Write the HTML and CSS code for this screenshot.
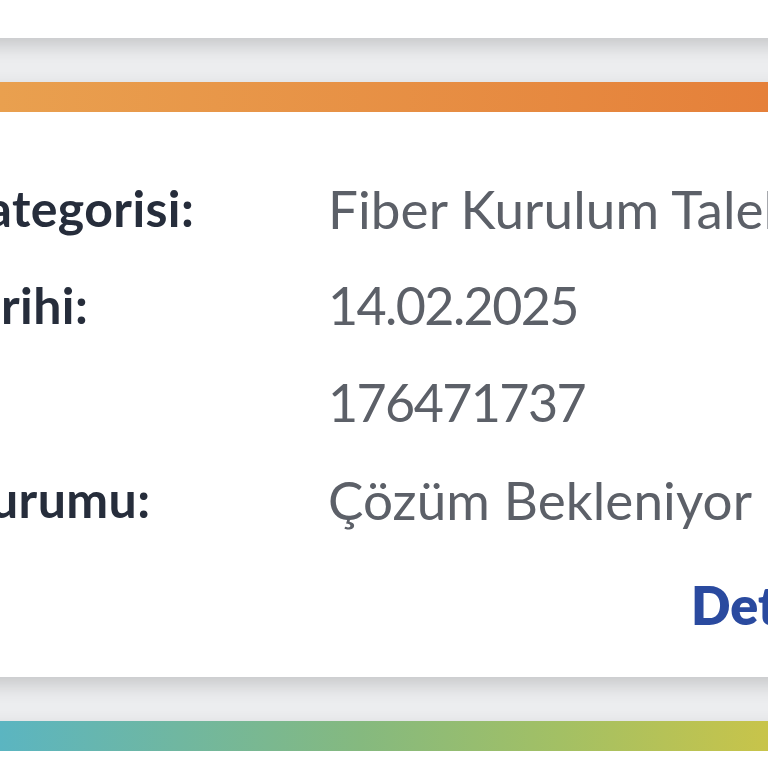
FILE: index.html
```html
<!DOCTYPE html>
<html lang="tr">
<head>
<meta charset="utf-8">
<title>Talep Detayı</title>
<link rel="stylesheet" href="styles.css">
</head>
<body>
<div class="viewport">
  <div class="card card-prev"></div>

  <div class="card">
    <div class="bar bar-orange"></div>
    <div class="card-body">
      <dl class="info">
        <dt class="label">Talep Kategorisi:</dt>
        <dd class="value">Fiber Kurulum Talebi</dd>
        <dt class="label">Talep Tarihi:</dt>
        <dd class="value value-num">14.02.2025</dd>
        <dt class="label">No:</dt>
        <dd class="value value-num">176471737</dd>
        <dt class="label">Talep Durumu:</dt>
        <dd class="value">Çözüm Bekleniyor</dd>
      </dl>
      <div class="actions">
        <a class="detail-link" href="#">Detay</a>
      </div>
    </div>
  </div>

  <div class="card card-next">
    <div class="bar bar-green"></div>
    <div class="card-body card-body-next"></div>
  </div>
</div>
</body>
</html>
```

FILE: styles.css
```css
html, body {
  margin: 0;
  padding: 0;
}

body {
  background: #ecedef;
  font-family: "Lato", "Noto Sans", sans-serif;
  overflow: hidden;
}

.viewport {
  width: 768px;
  height: 768px;
  overflow: hidden;
  display: flex;
  flex-direction: column;
  gap: 44px;
}

.card {
  background: #ffffff;
  margin-left: -240px;
  width: 1300px;
  box-shadow: 0 8px 18px rgba(0, 0, 0, 0.16);
  flex-shrink: 0;
}

.card-prev {
  height: 38px;
}

.bar {
  height: 30px;
}

.bar-orange {
  background: linear-gradient(90deg, #eca554 0%, #e9a04f 240px, #e5803a 1008px, #e27833 100%);
}

.bar-green {
  background: linear-gradient(90deg, #5ab6c6 0%, #5bb5c1 240px, #85b97f 600px, #a3c064 800px, #c8c44a 1008px, #cdc548 100%);
}

.card-body {
  height: 565px;
  padding-top: 48px;
  box-sizing: border-box;
}

.card-body-next {
  height: 60px;
}

.info {
  margin: 0;
  display: grid;
  grid-template-columns: 568px 1fr;
  line-height: 97px;
}

.label {
  margin: 0;
  font-size: 50px;
  font-weight: 700;
  color: #262d3b;
  white-space: nowrap;
  padding-left: 60px;
  letter-spacing: 0.4px;
}

.value {
  margin: 0;
  font-size: 53px;
  color: #5c6068;
  white-space: nowrap;
  letter-spacing: 0.1px;
}

.value-num {
  font-size: 52px;
  letter-spacing: -1.6px;
}

.actions {
  display: flex;
  padding-left: 931px;
  margin-top: 9px;
}

.detail-link {
  font-size: 52px;
  line-height: 97px;
  font-weight: 800;
  color: #2a4a9f;
  text-decoration: none;
}
```
